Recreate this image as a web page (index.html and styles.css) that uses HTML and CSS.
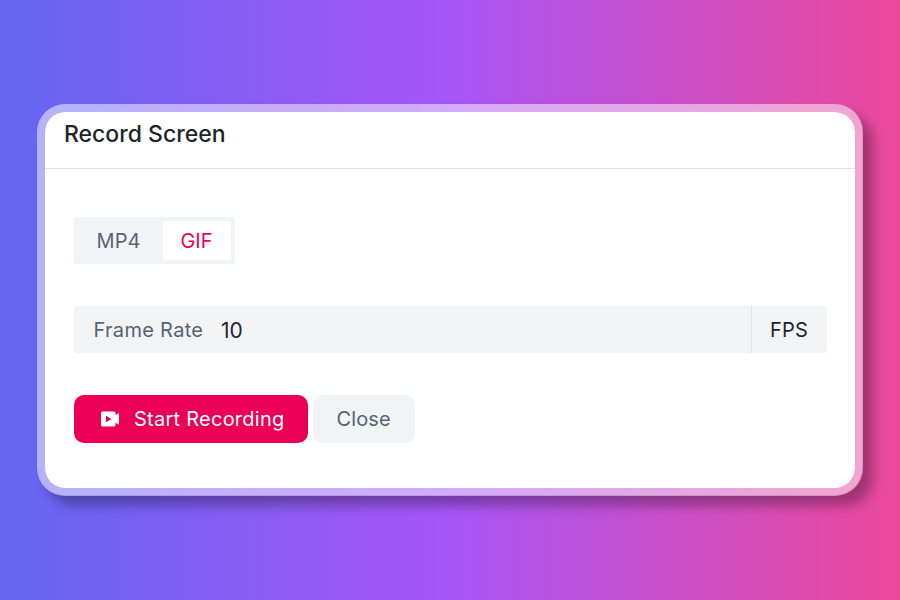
FILE: index.html
```html
<!DOCTYPE html>
<html lang="en">
<head>
<meta charset="utf-8">
<title>Record Screen</title>
<link rel="stylesheet" href="styles.css">
</head>
<body>
<main class="dialog">
  <header class="dialog-header"><h1>Record Screen</h1></header>
  <div class="dialog-body">
    <div class="tabs">
      <button class="tab">MP4</button>
      <button class="tab tab-active">GIF</button>
    </div>
    <div class="field">
      <span class="field-label">Frame Rate</span>
      <span class="field-value">10</span>
      <span class="field-unit">FPS</span>
    </div>
    <div class="actions">
      <button class="btn btn-primary">
        <svg class="icon" viewBox="0 0 19 16" fill="currentColor"><path fill-rule="evenodd" d="M1.5 0.5H13a1.5 1.5 0 0 1 1.5 1.5V4L18 2V13.8L14.5 11.8V14a1.5 1.5 0 0 1-1.5 1.5H1.5A1.5 1.5 0 0 1 0 14V2A1.5 1.5 0 0 1 1.5 0.5ZM5 4.7V11.3L10.4 8Z"/></svg>
        <span>Start Recording</span>
      </button>
      <button class="btn btn-secondary">Close</button>
    </div>
  </div>
</main>
</body>
</html>
```
FILE: styles.css
```css
* {
  box-sizing: border-box;
}

body {
  margin: 0;
  height: 600px;
  display: flex;
  align-items: center;
  justify-content: center;
  background: linear-gradient(90deg, #6366f1, #a855f7, #ec4899);
  font-family: Inter, sans-serif;
  font-size: 20px;
  color: #1f2430;
}

button {
  font: inherit;
  border: 0;
  padding: 0;
}

.dialog {
  width: 826px;
  height: 392px;
  border: 8px solid rgba(255, 255, 255, 0.5);
  border-radius: 28px;
  background: #fff;
  background-clip: padding-box;
  box-shadow: 10px 10px 12px rgba(0, 0, 0, 0.3);
}

.dialog-header {
  height: 57px;
  padding: 6px 19px 0;
  border-bottom: 1px solid #dfe1e4;
}

.dialog-header h1 {
  margin: 0;
  font-size: 23px;
  line-height: 32px;
  font-weight: 500;
  color: #212529;
}

.dialog-body {
  padding: 48px 28px 0 29px;
}

.tabs {
  display: flex;
  width: 161px;
  height: 47px;
  padding: 4px;
  border-radius: 3px;
  background: #f1f3f5;
}

.tab {
  width: 85px;
  padding-right: 4px;
  border-radius: 3px;
  background: none;
  color: #566375;
}

.tab-active {
  width: 68px;
  padding: 0 1px 0 0;
  background: #fff;
  color: #ec0056;
}

.field {
  display: flex;
  align-items: center;
  height: 47px;
  margin-top: 42px;
  padding-left: 19.5px;
  border-radius: 3px;
  background: #f1f3f5;
}

.field-label {
  width: 127.5px;
  letter-spacing: 0.3px;
  color: #566375;
}

.field-value {
  flex: 1;
  padding-top: 1px;
  font-size: 21px;
}

.field-unit {
  width: 76px;
  height: 47px;
  padding-right: 1px;
  line-height: 48px;
  border-left: 1px solid #e1e4e7;
  text-align: center;
  letter-spacing: 0.2px;
}

.actions {
  display: flex;
  gap: 5px;
  margin-top: 42px;
}

.btn {
  display: flex;
  align-items: center;
  height: 48px;
  border-radius: 10px;
}

.btn-primary {
  width: 234px;
  padding-left: 27px;
  gap: 14px;
  background: #ec0056;
  color: #fff;
  letter-spacing: 0.25px;
}

.btn-secondary {
  width: 102px;
  padding-left: 23.5px;
  background: #f1f3f5;
  color: #566375;
  letter-spacing: 0.1px;
}

.icon {
  width: 19px;
  height: 16px;
}
```
